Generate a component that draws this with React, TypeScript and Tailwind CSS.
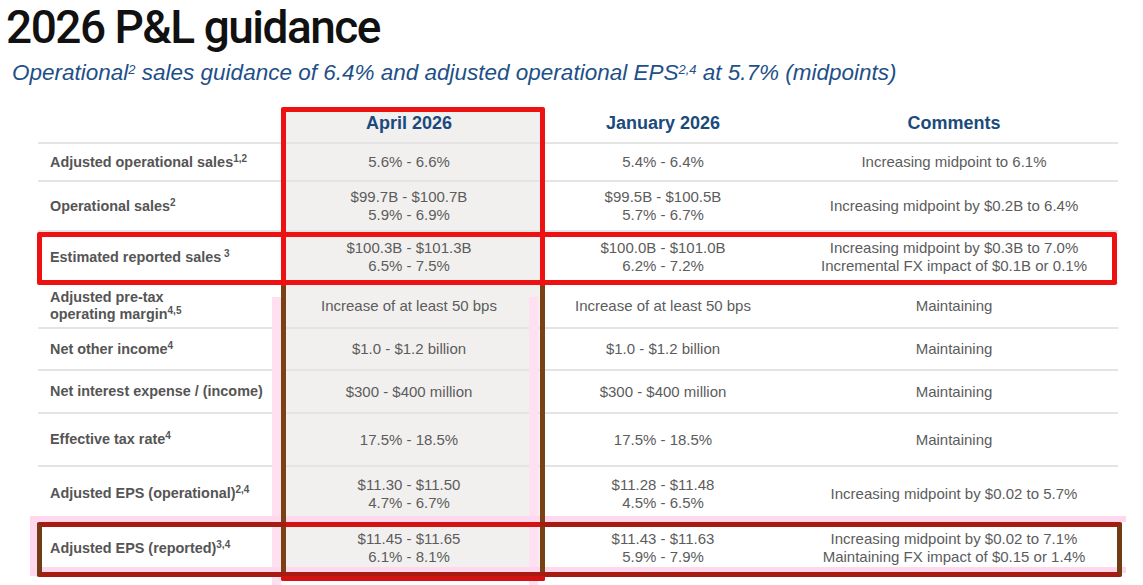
const font = "font-['Liberation_Sans',Arial,sans-serif]";
const cols = "grid grid-cols-[245px_257px_246px_332px]";

type Row = {
  label: string[];
  sup: string;
  apr: string[];
  jan: string[];
  com: string[];
  h: string;
};

const rows: Row[] = [
  { label: ["Adjusted operational sales"], sup: "1,2", apr: ["5.6% - 6.6%"], jan: ["5.4% - 6.4%"], com: ["Increasing midpoint to 6.1%"], h: "h-[38px]" },
  { label: ["Operational sales"], sup: "2", apr: ["$99.7B - $100.7B", "5.9% - 6.9%"], jan: ["$99.5B - $100.5B", "5.7% - 6.7%"], com: ["Increasing midpoint by $0.2B to 6.4%"], h: "h-[50px]" },
  { label: ["Estimated reported sales"], sup: " 3", apr: ["$100.3B - $101.3B", "6.5% - 7.5%"], jan: ["$100.0B - $101.0B", "6.2% - 7.2%"], com: ["Increasing midpoint by $0.3B to 7.0%", "Incremental FX impact of $0.1B or 0.1%"], h: "h-[52px]" },
  { label: ["Adjusted pre-tax", "operating margin"], sup: "4,5", apr: ["Increase of at least 50 bps"], jan: ["Increase of at least 50 bps"], com: ["Maintaining"], h: "h-[45px]" },
  { label: ["Net other income"], sup: "4", apr: ["$1.0 - $1.2 billion"], jan: ["$1.0 - $1.2 billion"], com: ["Maintaining"], h: "h-[42px]" },
  { label: ["Net interest expense / (income)"], sup: "", apr: ["$300 - $400 million"], jan: ["$300 - $400 million"], com: ["Maintaining"], h: "h-[43px]" },
  { label: ["Effective tax rate"], sup: "4", apr: ["17.5% - 18.5%"], jan: ["17.5% - 18.5%"], com: ["Maintaining"], h: "h-[53px]" },
  { label: ["Adjusted EPS (operational)"], sup: "2,4", apr: ["$11.30 - $11.50", "4.7% - 6.7%"], jan: ["$11.28 - $11.48", "4.5% - 6.5%"], com: ["Increasing midpoint by $0.02 to 5.7%"], h: "h-[55px]" },
  { label: ["Adjusted EPS (reported)"], sup: "3,4", apr: ["$11.45 - $11.65", "6.1% - 8.1%"], jan: ["$11.43 - $11.63", "5.9% - 7.9%"], com: ["Increasing midpoint by $0.02 to 7.1%", "Maintaining FX impact of $0.15 or 1.4%"], h: "h-[54px]" },
];

function Lines({ items }: { items: string[] }) {
  return (
    <div className="text-center leading-[18px]">
      {items.map((t) => (
        <div key={t}>{t}</div>
      ))}
    </div>
  );
}

export default function App() {
  return (
    <div className={`relative w-[1143px] h-[585px] overflow-hidden bg-white ${font}`}>
      <h1 className="pl-[6px] pt-[4px] font-['Roboto',Arial,sans-serif] text-[46px] leading-[46px] font-medium tracking-[-1.5px] text-[#111]">
        2026 P&amp;L guidance
      </h1>
      <p className="mt-[10px] pl-[12px] text-[22.5px] leading-[25px] italic text-[#1e5087]">
        Operational<sup className="text-[13px]">2</sup> sales guidance of 6.4% and adjusted operational EPS
        <sup className="text-[13px]">2,4</sup> at 5.7% (midpoints)
      </p>

      {/* table */}
      <div className="ml-[38px] mt-[23px] w-[1080px] text-[15px] text-[#5c5c5c]">
        <div className={`${cols} h-[36px] border-b-2 border-[#e4e4e4] text-[18px] font-bold text-[#1b4a7c]`}>
          <div />
          <div className="flex items-center justify-center bg-[#f1f0ef] pb-[4px] pr-[5px]">April 2026</div>
          <div className="flex items-center justify-center pb-[4px]">January 2026</div>
          <div className="flex items-center justify-center pb-[4px] pl-[4px]">Comments</div>
        </div>
        {rows.map((r) => (
          <div key={r.label.join(" ")} className={`${cols} border-b-2 border-[#e4e4e4] ${r.h}`}>
            <div className="flex items-center pl-[12px] text-[14.4px] font-bold text-[#555] leading-[17px]">
              <div>
                {r.label.map((l, i) => (
                  <div key={l}>
                    {l}
                    {i === r.label.length - 1 && r.sup && <sup className="text-[10px]">{r.sup}</sup>}
                  </div>
                ))}
              </div>
            </div>
            <div className="flex items-center justify-center bg-[#f1f0ef] pr-[5px]">
              <Lines items={r.apr} />
            </div>
            <div className="flex items-center justify-center">
              <Lines items={r.jan} />
            </div>
            <div className="flex items-center justify-center pl-[4px]">
              <Lines items={r.com} />
            </div>
          </div>
        ))}
      </div>

      {/* annotation overlays */}
      <div className="absolute left-[272px] top-[297px] w-[9px] h-[290px] bg-[#ffe0f1]" />
      <div className="absolute left-[529px] top-[297px] w-[9px] h-[290px] bg-[#ffe0f1]" />
      <div className="absolute left-[30px] top-[516px] w-[1096px] h-[6px] bg-[#ffd8ee]" />
      <div className="absolute left-[30px] top-[567px] w-[1096px] h-[6px] bg-[#ffd8ee]" />
      <div className="absolute left-[30px] top-[516px] w-[7px] h-[60px] bg-[#ffd8ee]" />

      <div className="absolute left-[281px] top-[107px] w-[264px] h-[474px] border-[5px] border-[#ee1111] rounded-[2px]" />
      <div className="absolute left-[37px] top-[232px] w-[1080px] h-[53px] border-[5px] border-[#ee1111] rounded-[2px]" />

      <div className="absolute left-[281px] top-[286px] w-[5px] h-[290px] bg-[#7a4214]" />
      <div className="absolute left-[540px] top-[286px] w-[5px] h-[290px] bg-[#7a4214]" />

      <div className="absolute left-[37px] top-[522px] w-[1085px] h-[55px] border-[5px] border-[#a61c10] border-l-[#6f3c15] border-r-[#6f3c15] rounded-[2px]" />
      <div className="absolute left-[286px] top-[522px] w-[254px] h-[5px] bg-[#d31212]" />
      <div className="absolute left-[281px] top-[576px] w-[264px] h-[5px] bg-[#d31212] rounded-b-[2px]" />
    </div>
  );
}
